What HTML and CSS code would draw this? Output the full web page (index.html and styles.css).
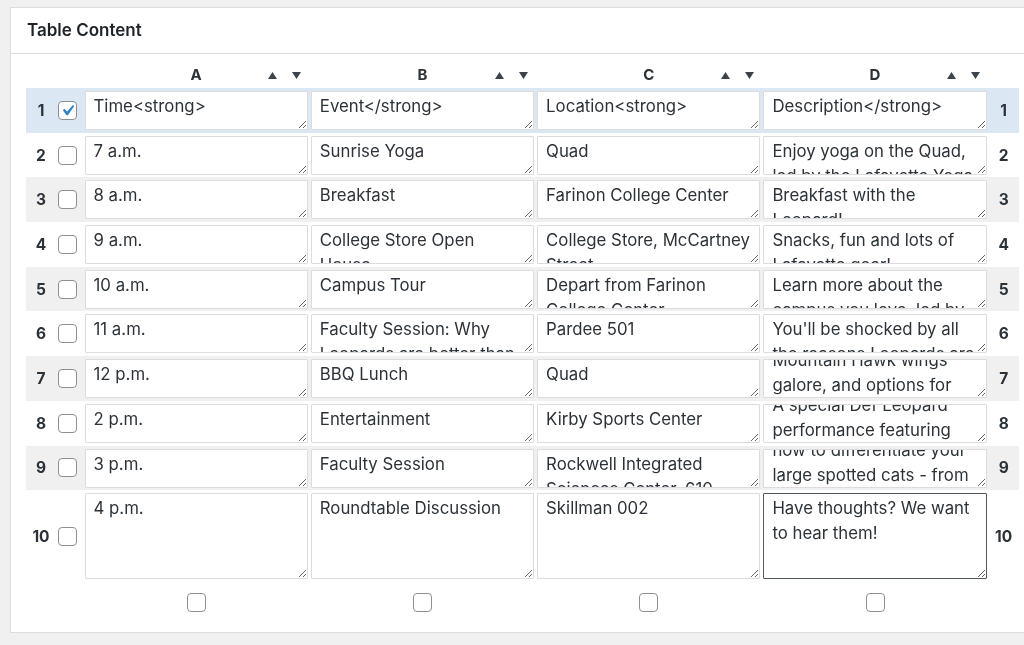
FILE: index.html
```html
<!DOCTYPE html>
<html lang="en">
<head>
<meta charset="utf-8">
<title>Table Content</title>
<link rel="stylesheet" href="styles.css">
</head>
<body>
<div class="postbox">
  <div class="postbox-header"><h2>Table Content</h2></div>
  <div class="inside">
    <table class="edit-table">
      <colgroup>
        <col class="c-num"><col class="c-check"><col class="c-cell"><col class="c-cell"><col class="c-cell"><col class="c-cell"><col class="c-num-right">
      </colgroup>
      <thead>
        <tr>
          <th></th><th></th>
          <th><div class="col-head"><span class="col-letter">A</span><span class="sort"><svg viewBox="0 0 9 7" class="arrow"><polygon points="0,7 4.5,0 9,7"/></svg><svg viewBox="0 0 9 7" class="arrow"><polygon points="0,0 9,0 4.5,7"/></svg></span></div></th>
          <th><div class="col-head"><span class="col-letter">B</span><span class="sort"><svg viewBox="0 0 9 7" class="arrow"><polygon points="0,7 4.5,0 9,7"/></svg><svg viewBox="0 0 9 7" class="arrow"><polygon points="0,0 9,0 4.5,7"/></svg></span></div></th>
          <th><div class="col-head"><span class="col-letter">C</span><span class="sort"><svg viewBox="0 0 9 7" class="arrow"><polygon points="0,7 4.5,0 9,7"/></svg><svg viewBox="0 0 9 7" class="arrow"><polygon points="0,0 9,0 4.5,7"/></svg></span></div></th>
          <th><div class="col-head"><span class="col-letter">D</span><span class="sort"><svg viewBox="0 0 9 7" class="arrow"><polygon points="0,7 4.5,0 9,7"/></svg><svg viewBox="0 0 9 7" class="arrow"><polygon points="0,0 9,0 4.5,7"/></svg></span></div></th>
          <th></th>
        </tr>
      </thead>
      <tbody>
        <tr class="is-selected">
          <td class="row-num">1</td><td class="row-check"><input type="checkbox" class="cb" checked></td>
          <td class="cell"><textarea>Time&lt;strong&gt;</textarea></td>
          <td class="cell"><textarea>Event&lt;/strong&gt;</textarea></td>
          <td class="cell"><textarea>Location&lt;strong&gt;</textarea></td>
          <td class="cell"><textarea>Description&lt;/strong&gt;</textarea></td>
          <td class="row-num">1</td>
        </tr>
        <tr>
          <td class="row-num">2</td><td class="row-check"><input type="checkbox" class="cb"></td>
          <td class="cell"><textarea>7 a.m.</textarea></td>
          <td class="cell"><textarea>Sunrise Yoga</textarea></td>
          <td class="cell"><textarea>Quad</textarea></td>
          <td class="cell"><textarea>Enjoy yoga on the Quad, led by the Lafayette Yoga Club.</textarea></td>
          <td class="row-num">2</td>
        </tr>
        <tr class="is-alt">
          <td class="row-num">3</td><td class="row-check"><input type="checkbox" class="cb"></td>
          <td class="cell"><textarea>8 a.m.</textarea></td>
          <td class="cell"><textarea>Breakfast</textarea></td>
          <td class="cell"><textarea>Farinon College Center</textarea></td>
          <td class="cell"><textarea>Breakfast with the Leopard!</textarea></td>
          <td class="row-num">3</td>
        </tr>
        <tr>
          <td class="row-num">4</td><td class="row-check"><input type="checkbox" class="cb"></td>
          <td class="cell"><textarea>9 a.m.</textarea></td>
          <td class="cell"><textarea>College Store Open House</textarea></td>
          <td class="cell"><textarea>College Store, McCartney Street</textarea></td>
          <td class="cell"><textarea>Snacks, fun and lots of Lafayette gear!</textarea></td>
          <td class="row-num">4</td>
        </tr>
        <tr class="is-alt">
          <td class="row-num">5</td><td class="row-check"><input type="checkbox" class="cb"></td>
          <td class="cell"><textarea>10 a.m.</textarea></td>
          <td class="cell"><textarea>Campus Tour</textarea></td>
          <td class="cell"><textarea>Depart from Farinon College Center</textarea></td>
          <td class="cell"><textarea>Learn more about the campus you love, led by student guides.</textarea></td>
          <td class="row-num">5</td>
        </tr>
        <tr>
          <td class="row-num">6</td><td class="row-check"><input type="checkbox" class="cb"></td>
          <td class="cell"><textarea>11 a.m.</textarea></td>
          <td class="cell"><textarea>Faculty Session: Why Leopards are better than Mountain Hawks</textarea></td>
          <td class="cell"><textarea>Pardee 501</textarea></td>
          <td class="cell"><textarea>You'll be shocked by all the reasons Leopards are the best.</textarea></td>
          <td class="row-num">6</td>
        </tr>
        <tr class="is-alt">
          <td class="row-num">7</td><td class="row-check"><input type="checkbox" class="cb"></td>
          <td class="cell"><textarea>12 p.m.</textarea></td>
          <td class="cell"><textarea>BBQ Lunch</textarea></td>
          <td class="cell"><textarea>Quad</textarea></td>
          <td class="cell"><textarea data-scroll="39">A classic cookout lunch.
Mountain Hawk wings galore, and options for every diet.</textarea></td>
          <td class="row-num">7</td>
        </tr>
        <tr>
          <td class="row-num">8</td><td class="row-check"><input type="checkbox" class="cb"></td>
          <td class="cell"><textarea>2 p.m.</textarea></td>
          <td class="cell"><textarea>Entertainment</textarea></td>
          <td class="cell"><textarea>Kirby Sports Center</textarea></td>
          <td class="cell"><textarea data-scroll="14">A special Def Leopard performance featuring faculty musicians.</textarea></td>
          <td class="row-num">8</td>
        </tr>
        <tr class="is-alt">
          <td class="row-num">9</td><td class="row-check"><input type="checkbox" class="cb"></td>
          <td class="cell"><textarea>3 p.m.</textarea></td>
          <td class="cell"><textarea>Faculty Session</textarea></td>
          <td class="cell"><textarea>Rockwell Integrated Sciences Center, 610</textarea></td>
          <td class="cell"><textarea data-scroll="39">Biology faculty explain
how to differentiate your large spotted cats - from leopards to cheetahs.</textarea></td>
          <td class="row-num">9</td>
        </tr>
        <tr class="is-tall">
          <td class="row-num">10</td><td class="row-check"><input type="checkbox" class="cb"></td>
          <td class="cell"><textarea>4 p.m.</textarea></td>
          <td class="cell"><textarea>Roundtable Discussion</textarea></td>
          <td class="cell"><textarea>Skillman 002</textarea></td>
          <td class="cell"><textarea class="is-active">Have thoughts? We want to hear them!</textarea></td>
          <td class="row-num">10</td>
        </tr>
      </tbody>
      <tfoot>
        <tr>
          <td></td><td></td>
          <td><input type="checkbox" class="cb"></td>
          <td><input type="checkbox" class="cb"></td>
          <td><input type="checkbox" class="cb"></td>
          <td><input type="checkbox" class="cb"></td>
          <td></td>
        </tr>
      </tfoot>
    </table>
  </div>
</div>
<script src="script.js"></script>
</body>
</html>
```

FILE: styles.css
```css
* { box-sizing: border-box; }

body {
  margin: 0;
  background: #f0f0f1;
  color: #1d2327;
  font-family: Inter, "Noto Sans", sans-serif;
  overflow: hidden;
}

/* Metabox frame */
.postbox {
  margin: 7px -14px 0 10px;
  background: #fff;
  border: 1px solid #dcdcde;
}

.postbox-header {
  height: 46px;
  border-bottom: 1px solid #dcdcde;
  display: flex;
  align-items: center;
  padding: 0 16px 1px;
}

.postbox-header h2 {
  margin: 0;
  font-size: 17px;
  font-weight: 600;
  color: #1d2327;
}

.inside {
  padding: 0 0 20px 15px;
}

/* Editable table grid */
.edit-table {
  border-collapse: separate;
  border-spacing: 0;
  table-layout: fixed;
  width: 993.2px;
}

.c-num { width: 30px; }
.c-check { width: 27px; }
.c-cell { width: 226.3px; }
.c-num-right { width: 31px; }

.edit-table th {
  height: 34px;
  padding: 0 0 3px;
  vertical-align: bottom;
  font-size: 15px;
  font-weight: 700;
  color: #2c3338;
}

.col-head {
  display: grid;
  grid-template-columns: 1fr auto 1fr;
  align-items: center;
  padding: 0 8px;
  line-height: 20px;
}

.col-letter { grid-column: 2; }

.sort {
  grid-column: 3;
  justify-self: end;
  display: flex;
  gap: 15px;
  align-items: center;
}

.arrow {
  width: 9px;
  height: 7px;
  display: block;
  fill: #3c434a;
}

.edit-table td {
  padding: 0;
  vertical-align: middle;
}

.is-selected td { background: #dbe7f3; }
.is-alt td { background: #f0f0f1; }

.row-num {
  text-align: center;
  font-size: 15.5px;
  font-weight: 700;
  color: #2c3338;
}

.edit-table td.row-check { padding-left: 2px; }

.edit-table td.cell {
  padding: 3px 1.5px 2.7px;
}

textarea {
  display: block;
  width: 100%;
  height: 39px;
  margin: 0;
  padding: 2px 8px;
  border: 1px solid #dcdcde;
  border-radius: 1px;
  background: #fff;
  color: #2c3338;
  font-family: Inter, "Noto Sans", sans-serif;
  font-size: 16.8px;
  line-height: 25px;
  resize: vertical;
  overflow: auto;
  scrollbar-width: none;
  outline: none;
}

textarea::-webkit-scrollbar { display: none; }

.is-tall textarea { height: 86px; }

textarea.is-active { border-color: #50575e; }

/* Checkboxes */
.cb {
  appearance: none;
  -webkit-appearance: none;
  display: block;
  width: 19px;
  height: 19px;
  margin: 0;
  border: 1px solid #8c8f94;
  border-radius: 4px;
  background: #fff;
}

.cb:checked {
  background-image: url("data:image/svg+xml,%3Csvg xmlns='http://www.w3.org/2000/svg' viewBox='0 0 20 20'%3E%3Cpath fill='%233582c4' d='M14.83 4.89l1.34.94-5.81 8.38H9.02L5.78 9.67l1.34-1.25 2.57 2.4z'/%3E%3C/svg%3E");
  background-size: 22px 22px;
  background-position: center;
  background-repeat: no-repeat;
}

tfoot td {
  padding-top: 11px !important;
}

tfoot .cb { margin: 0 auto; }
```

FILE: script.js
```js
document.querySelectorAll('textarea[data-scroll]').forEach(function (box) {
  box.scrollTop = Number(box.dataset.scroll);
});
```
